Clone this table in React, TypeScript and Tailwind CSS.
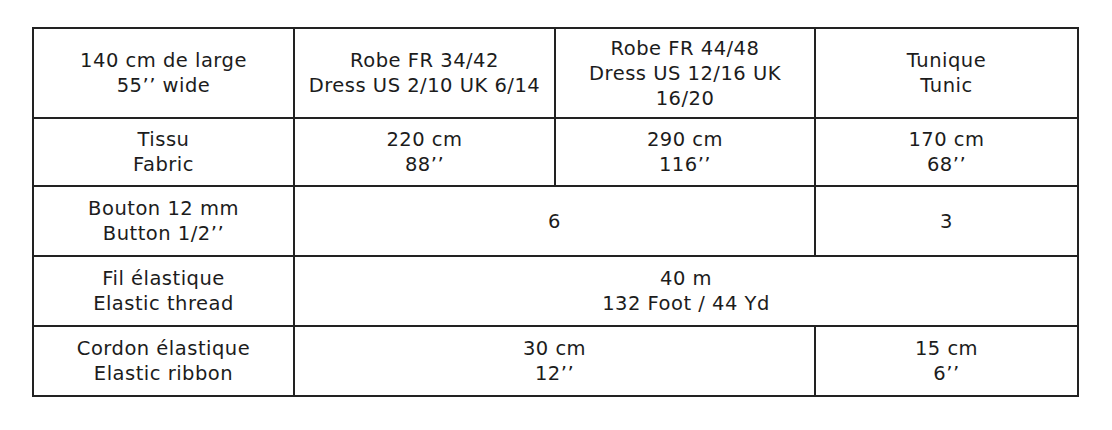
const rows: { h: string; cells: { lines: string[]; span?: number }[] }[] = [
  {
    h: "h-[90px]",
    cells: [
      { lines: ["140 cm de large", "55’’ wide"] },
      { lines: ["Robe FR 34/42", "Dress US 2/10 UK 6/14"] },
      { lines: ["Robe FR 44/48", "Dress US 12/16 UK", "16/20"] },
      { lines: ["Tunique", "Tunic"] },
    ],
  },
  {
    h: "h-[68px]",
    cells: [
      { lines: ["Tissu", "Fabric"] },
      { lines: ["220 cm", "88’’"] },
      { lines: ["290 cm", "116’’"] },
      { lines: ["170 cm", "68’’"] },
    ],
  },
  {
    h: "h-[70px]",
    cells: [
      { lines: ["Bouton 12 mm", "Button 1/2’’"] },
      { lines: ["6"], span: 2 },
      { lines: ["3"] },
    ],
  },
  {
    h: "h-[70px]",
    cells: [
      { lines: ["Fil élastique", "Elastic thread"] },
      { lines: ["40 m", "132 Foot / 44 Yd"], span: 3 },
    ],
  },
  {
    h: "h-[70px]",
    cells: [
      { lines: ["Cordon élastique", "Elastic ribbon"] },
      { lines: ["30 cm", "12’’"], span: 2 },
      { lines: ["15 cm", "6’’"] },
    ],
  },
];

export default function App() {
  return (
    <div className="w-[1112px] h-[430px] bg-white pt-[27px] pl-[32px] font-['DejaVu_Sans',sans-serif] text-[#1c1c1c]">
      <table className="border-collapse table-fixed w-[1045px] border-2 border-[#222]">
        <colgroup>
          <col className="w-[261px]" />
          <col className="w-[261px]" />
          <col className="w-[260px]" />
          <col className="w-[263px]" />
        </colgroup>
        <tbody>
          {rows.map((r, i) => (
            <tr key={i} className={r.h}>
              {r.cells.map((c, j) => (
                <td
                  key={j}
                  colSpan={c.span}
                  className="border-2 border-[#222] text-center align-middle text-[19.5px] leading-[25px] tracking-[0.5px] p-0"
                >
                  {c.lines.map((l, k) => (
                    <div key={k}>{l}</div>
                  ))}
                </td>
              ))}
            </tr>
          ))}
        </tbody>
      </table>
    </div>
  );
}
